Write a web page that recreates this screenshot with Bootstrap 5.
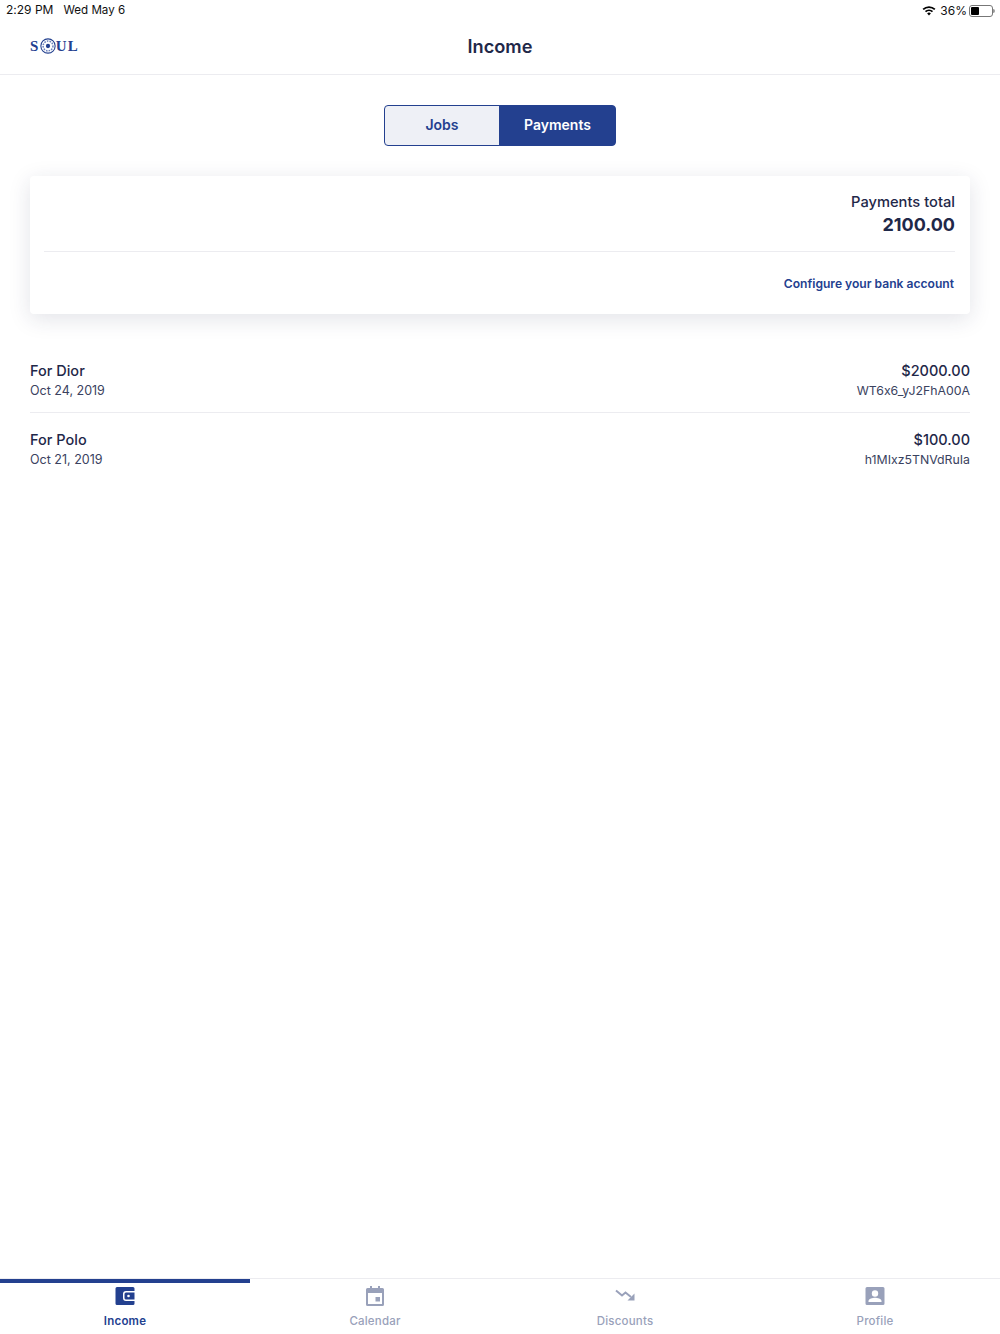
<!DOCTYPE html>
<html lang="en">
<head>
  <meta charset="UTF-8">
  <title>Income</title>
  <link rel="stylesheet" href="https://cdn.jsdelivr.net/npm/bootstrap@5.3.2/dist/css/bootstrap.min.css">
  <style>
    html, body { height: 100%; }
    body { font-family: Inter, "Liberation Sans", sans-serif; color: #1f2849; background: #fff; font-feature-settings: "calt" 0; }
    .app-shell { height: 1334px; overflow: hidden; }
    .status-bar { height: 20px; padding: 1px 5px 0 6px; font-size: 12px; color: #111; }
    .status-bar .clock { margin-right: 10px; }
    .status-date { font-size: 11.6px; }
    .status-pct { font-size: 12px; margin-left: 4px; margin-right: 1px; }
    .batt { width: 24px; height: 12px; border: 1px solid #777; border-radius: 3px; padding: 1px; margin-left: 1px; }
    .batt i { display: block; width: 8px; height: 100%; background: #000; border-radius: 1px; }
    .batt-tip { width: 2px; height: 4px; background: #999; border-radius: 0 2px 2px 0; }
    .top-bar { height: 55px; border-bottom: 1px solid #ececf0; position: relative; }
    .top-title { font-size: 18.2px; font-weight: 600; line-height: 53px; margin: 0; }
    .logo-box { position: absolute; left: 30px; top: 17px; display: flex; align-items: center; font-family: "Liberation Serif", serif; font-weight: 700; font-size: 15px; color: #23408f; letter-spacing: 1.3px; line-height: 18px; }
    .seg-wrap { padding-top: 30px; padding-bottom: 30px; }
    .seg-btn { height: 41px; font-size: 14px; font-weight: 600; border: 1px solid #23408f; padding: 0 0 2px; --bs-btn-border-radius: 4px; }
    .seg-off { width: 116px; background: #eef0f6; color: #23408f; }
    .seg-on { width: 117px; background: #23408f; color: #fff; }
    .seg-off:hover { background: #eef0f6; color: #23408f; border-color: #23408f; }
    .seg-on:hover { background: #23408f; color: #fff; border-color: #23408f; }
    .total-card { margin: 0 30px; height: 138px; border: 0; border-radius: 4px; box-shadow: 0 5px 22px rgba(30, 40, 80, .13); padding: 0 15px 0 14px; }
    .total-label { font-size: 14.7px; font-weight: 500; line-height: 20px; padding-top: 16px; }
    .total-value { font-size: 18px; font-weight: 700; line-height: 26px; }
    .total-rule { height: 1px; background: #ececf0; margin-top: 13px; }
    .bank-link { font-size: 12.1px; font-weight: 600; color: #23408f; text-decoration: none; line-height: 18px; margin-top: 23px; padding-right: 1px; display: block; }
    .pay-list { margin: 31px 30px 0; }
    .pay-row { padding: 16px 0 11px; border-bottom: 1px solid #ececf0; }
    .pay-row + .pay-row { padding-top: 17px; }
    .pay-row:last-child { border-bottom: 0; }
    .pay-main { font-size: 14.5px; font-weight: 500; line-height: 20px; }
    .pay-sub { font-size: 12.5px; line-height: 20px; color: #3a4260; }
    .pay-ref { font-size: 12.3px; }
    .tab-bar { height: 56px; border-top: 1px solid #ececf0; position: relative; }
    .tab-item { width: 25%; text-align: center; color: #99a1ba; font-size: 11.5px; font-weight: 500; padding-top: 7px; position: relative; }
    .tab-item svg { display: block; margin: 0 auto 6px; }
    .tab-item span { display: block; line-height: 18px; letter-spacing: .2px; }
    .tab-on { color: #23408f; font-weight: 600; }
    .tab-on::before { content: ""; position: absolute; left: 0; right: 0; top: 0; height: 4px; background: #23408f; }
  </style>
</head>
<body>
<div class="app-shell d-flex flex-column">
  <!-- status bar -->
  <div class="status-bar d-flex align-items-baseline">
    <span class="clock">2:29 PM</span>
    <span class="status-date">Wed May 6</span>
    <span class="ms-auto d-flex align-items-center align-self-center">
      <svg width="14" height="11" viewBox="0 0 15 11"><path d="M.6 3.6a10 10 0 0 1 13.8 0l-1.3 1.4a8 8 0 0 0-11.2 0z" fill="#000"/><path d="M3.1 6.1a6.4 6.4 0 0 1 8.8 0l-1.3 1.4a4.5 4.5 0 0 0-6.2 0z" fill="#000"/><path d="M5.5 8.6a3 3 0 0 1 4 0L7.5 10.8z" fill="#000"/></svg>
      <span class="status-pct">36%</span>
      <span class="batt"><i></i></span><span class="batt-tip"></span>
    </span>
  </div>

  <!-- header -->
  <div class="top-bar text-center">
    <div class="logo-box">
      <span>S</span>
      <svg width="16" height="16" viewBox="0 0 15 15"><circle cx="7.5" cy="7.5" r="6.7" fill="none" stroke="#23408f" stroke-width="1"/><circle cx="7.5" cy="7.5" r="4.6" fill="none" stroke="#6d83bd" stroke-width="1.4" stroke-dasharray="1.5 1"/><circle cx="7.5" cy="7.5" r="2" fill="#23408f"/></svg>
      <span>UL</span>
    </div>
    <h1 class="top-title">Income</h1>
  </div>

  <!-- jobs / payments switch -->
  <div class="seg-wrap d-flex justify-content-center">
    <div class="btn-group">
      <button type="button" class="btn seg-btn seg-off">Jobs</button>
      <button type="button" class="btn seg-btn seg-on">Payments</button>
    </div>
  </div>

  <div class="card total-card">
    <div class="text-end total-label">Payments total</div>
    <div class="text-end total-value">2100.00</div>
    <div class="total-rule"></div>
    <a href="#" class="bank-link text-end">Configure your bank account</a>
  </div>

  <div class="pay-list">
    <div class="pay-row d-flex justify-content-between">
      <div>
        <div class="pay-main">For Dior</div>
        <div class="pay-sub">Oct 24, 2019</div>
      </div>
      <div class="text-end">
        <div class="pay-main">$2000.00</div>
        <div class="pay-sub pay-ref">WT6x6_yJ2FhA00A</div>
      </div>
    </div>
    <div class="pay-row d-flex justify-content-between">
      <div>
        <div class="pay-main">For Polo</div>
        <div class="pay-sub">Oct 21, 2019</div>
      </div>
      <div class="text-end">
        <div class="pay-main">$100.00</div>
        <div class="pay-sub pay-ref">h1MIxz5TNVdRuIa</div>
      </div>
    </div>
  </div>

  <!-- bottom tabs -->
  <div class="tab-bar d-flex mt-auto">
    <div class="tab-item tab-on">
      <svg width="20" height="20" viewBox="0 0 20 20"><path d="M2 1h16a1.500 1.500 0 0 1 1.500 1.500V5H11a3 3 0 0 0-3 3v4a3 3 0 0 0 3 3h8.500v2.500A1.500 1.500 0 0 1 18 19H2a1.500 1.500 0 0 1-1.500-1.500v-15A1.500 1.500 0 0 1 2 1z" fill="#23408f"/><path d="M11 6.500h8.500v7H11A1.500 1.500 0 0 1 9.500 12V8A1.500 1.500 0 0 1 11 6.500z" fill="#23408f"/><circle cx="13.500" cy="10" r="1.300" fill="#fff"/></svg>
      <span>Income</span>
    </div>
    <div class="tab-item">
      <svg width="20" height="20" viewBox="0 0 20 20"><path d="M5 0h2v2h6V0h2v2h2.500A1.500 1.500 0 0 1 19 3.500v15a1.500 1.500 0 0 1-1.500 1.500h-15A1.500 1.500 0 0 1 1 18.500v-15A1.500 1.500 0 0 1 2.500 2H5zM3 7v11h14V7z" fill="#99a1ba"/><rect x="10.500" y="11" width="4.500" height="4.500" fill="#99a1ba"/></svg>
      <span>Calendar</span>
    </div>
    <div class="tab-item">
      <svg width="20" height="20" viewBox="0 0 20 20"><path d="M1 4.500l6 5 3.500-3L16 11" fill="none" stroke="#99a1ba" stroke-width="2"/><path d="M19.500 7.500v7h-7z" fill="#99a1ba"/></svg>
      <span>Discounts</span>
    </div>
    <div class="tab-item">
      <svg width="20" height="20" viewBox="0 0 20 20"><path d="M2 1h16a1.500 1.500 0 0 1 1.500 1.500v15A1.500 1.500 0 0 1 18 19H2a1.500 1.500 0 0 1-1.500-1.500v-15A1.500 1.500 0 0 1 2 1z" fill="#99a1ba"/><circle cx="10" cy="7.500" r="3.200" fill="#fff"/><path d="M3.500 16v-1c0-2.200 4.200-3.300 6.500-3.300s6.500 1.100 6.500 3.300v1z" fill="#fff"/></svg>
      <span>Profile</span>
    </div>
  </div>
</div>
<script src="https://cdn.jsdelivr.net/npm/bootstrap@5.3.2/dist/js/bootstrap.bundle.min.js"></script>
</body>
</html>
